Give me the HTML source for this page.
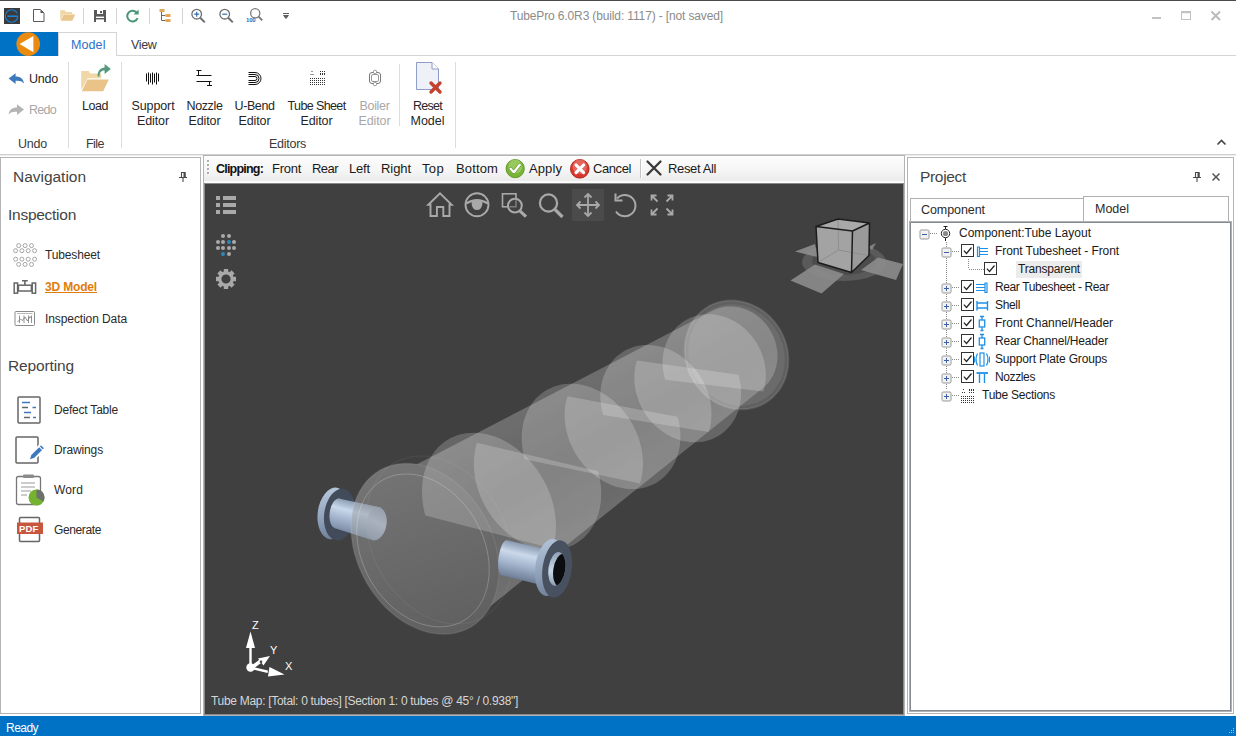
<!DOCTYPE html>
<html><head><meta charset='utf-8'><title>TubePro</title><style>
html,body{margin:0;padding:0}
body{width:1236px;height:736px;overflow:hidden;background:#fff;position:relative;font-family:"Liberation Sans",sans-serif;font-size:12px;color:#1e1e1e}
.t{position:absolute;white-space:pre;line-height:16px;height:16px}
.a{position:absolute}
svg{position:absolute;overflow:visible}
</style></head><body>
<div class='a' style='left:0;top:0;width:1236px;height:1px;background:#4a4a4a'></div>
<svg style="left:0;top:0" width="300" height="32" viewBox="0 0 300 32">
<rect x="4" y="8" width="16" height="16" fill="#3b3b3d"/>
<circle cx="11.6" cy="16" r="6.2" fill="none" stroke="#1b83d6" stroke-width="1.1"/>
<path d="M7.5 16.2 h9.5" stroke="#1b83d6" stroke-width="1.6"/>
<rect x="17" y="12.5" width="2" height="3" fill="#3b3b3d"/>
<path d="M33.5 9.5 h7 l3.5 3.5 v8.5 h-10.5 z" fill="#fff" stroke="#5a5a5a" stroke-width="1"/>
<path d="M40.5 9.5 v3.5 h3.5 z" fill="#5a5a5a"/>
<path d="M60.2 10.3 h4.6 l1 1.7 h6.4 v2.2 h-9 l-3 6.4 z" fill="#f0d7a6"/>
<path d="M63.6 14.6 h11.6 l-2.9 6.2 h-11.6 z" fill="#e9c68b"/>
<rect x="83" y="8" width="1" height="16" fill="#d4d4d4"/>
<path d="M94 10 h12 v12 h-12 z" fill="#595959"/>
<rect x="97" y="10" width="6" height="4" fill="#fff"/><rect x="100" y="11" width="2" height="2.2" fill="#595959"/>
<rect x="96" y="16.6" width="8" height="1.4" fill="#fff"/><rect x="96" y="19.4" width="8" height="2.6" fill="#fff"/>
<rect x="116" y="8" width="1" height="16" fill="#d4d4d4"/>
<path d="M137.2 13.2 A5.4 5.4 0 1 0 137.6 18.2" fill="none" stroke="#4a9577" stroke-width="2"/>
<path d="M138.6 9.6 v5 h-5 z" fill="#4a9577"/>
<rect x="149" y="8" width="1" height="16" fill="#d4d4d4"/>
<rect x="159.5" y="9" width="5" height="3" fill="#e3a857"/>
<path d="M161.5 12 v8.5 h4 M161.5 15.5 h4" fill="none" stroke="#6a6a6a" stroke-width="1"/>
<rect x="165.5" y="14" width="5" height="3" fill="#e3a857"/><rect x="165.5" y="19" width="5" height="3" fill="#e3a857"/>
<rect x="182" y="8" width="1" height="16" fill="#d4d4d4"/>
<circle cx="196.7" cy="14.2" r="4.8" fill="#fff" stroke="#6e6e6e" stroke-width="1.3"/>
<path d="M200.2 17.8 l4.6 4.6" stroke="#6e6e6e" stroke-width="2"/>
<path d="M194.2 14.2 h5 M196.7 11.7 v5" stroke="#2f6fba" stroke-width="1.2"/>
<circle cx="224.7" cy="14.2" r="4.8" fill="#fff" stroke="#6e6e6e" stroke-width="1.3"/>
<path d="M228.2 17.8 l4.6 4.6" stroke="#6e6e6e" stroke-width="2"/>
<path d="M222.2 14.2 h5" stroke="#2f6fba" stroke-width="1.2"/>
<circle cx="255.2" cy="13.2" r="4.6" fill="#fff" stroke="#7a7a7a" stroke-width="1.3"/>
<path d="M258.6 16.6 l3.6 3.8" stroke="#7a7a7a" stroke-width="2"/>
<path d="M283 13.5 h6 M283.6 15.5 h4.8 l-2.4 3 z" stroke="#5f5f5f" stroke-width="1" fill="#5f5f5f"/>
</svg>
<span class='t' style='left:246px;top:16px;font-size:6px;font-weight:700;color:#2f6fba;line-height:8px;height:8px;letter-spacing:-0.2px'>100</span>
<span class='t' style='left:510px;top:8.0px;font-size:12px;color:#8b8b8b;font-weight:400;letter-spacing:-0.136px;'>TubePro 6.0R3 (build: 1117) - [not saved]</span>
<svg style="left:1140px;top:0" width="96" height="32" viewBox="0 0 96 32">
<rect x="12" y="17" width="9" height="2" fill="#c2c2c2"/>
<rect x="41.5" y="11.5" width="9" height="8" fill="none" stroke="#c2c2c2" stroke-width="1"/><rect x="41" y="11" width="10" height="2.2" fill="#c2c2c2"/>
<path d="M71.5 11.5 l8.5 8.5 M80 11.5 l-8.5 8.5" stroke="#b9b9b9" stroke-width="1.8"/>
</svg>
<div class='a' style='left:0;top:32px;width:58px;height:24px;background:#0072c6'></div>
<svg style="left:0;top:32px" width="58" height="24" viewBox="0 32 58 24">
<circle cx="28.2" cy="44.1" r="11.8" fill="#ea8b10"/>
<path d="M19.6 44 L33.4 36 L33.4 52.2 Z" fill="#fff"/></svg>
<div class='a' style='left:117px;top:55px;width:1119px;height:1px;background:#d4d4d4'></div>
<div class='a' style='left:58px;top:32px;width:59px;height:24px;border:1px solid #d4d4d4;border-bottom:none;box-sizing:border-box;background:#fff'></div>
<span class='t' style='left:71px;top:37.0px;font-size:12.5px;color:#2a6fc9;font-weight:400;letter-spacing:0.091px;'>Model</span>
<span class='t' style='left:131px;top:37.0px;font-size:12.5px;color:#3a3a3a;font-weight:400;letter-spacing:-0.344px;'>View</span>
<svg style="left:0;top:56px" width="470" height="100" viewBox="0 56 470 100">
<path d="M8.6 78.6 L15.6 73.2 V76.4 C20.6 76.4 23.4 78.8 24 83.6 C21.8 81 19.6 80.6 15.6 80.8 V84 Z" fill="#3f79bd"/>
<path d="M24 109.6 L17 104.2 V107.4 C12 107.4 9.2 109.8 8.6 114.6 C10.8 112 13 111.6 17 111.8 V115 Z" fill="#b4b4b4"/>
<rect x="68" y="62" width="1" height="86" fill="#dcdcdc"/>
<rect x="121" y="62" width="1" height="86" fill="#dcdcdc"/>
<rect x="399" y="64" width="1" height="62" fill="#dcdcdc"/>
<rect x="455" y="62" width="1" height="86" fill="#dcdcdc"/>
<!-- load folder -->
<path d="M81.2 71 h7.4 l1.6 2.6 h11 v4.6 h-13.6 l-6.4 12 z" fill="#f0d7a6"/>
<path d="M87.4 79.6 h21.4 l-5.6 11.6 h-21.4 z" fill="#e9c388"/>
<path d="M97.6 76.4 C97.4 70.6 100.4 67.8 104.6 67.4 V64 L110.8 69 L104.6 74 V70.6 C101.6 70.6 99.2 72.6 99.6 76.4 Z" fill="#54997d"/>
<!-- support editor -->
<path d="M146.5 73.5 v8 M148.5 72.5 v12 M150.5 73.5 v9 M152.5 72.5 v12 M154.5 73.5 v9 M156.5 72.5 v12 M158.5 73.5 v8" stroke="#111" stroke-width="1"/>
<!-- nozzle editor -->
<path d="M196.5 70.5 h5 M198.5 70.5 v4.5 M196.5 75.5 h15 M196.5 81.5 h15 M209.5 81.5 v4.5 M207 85.5 h5" stroke="#111" stroke-width="1" fill="none"/>
<!-- u-bend editor -->
<path d="M248.5 72.5 h6.5 a6 6 0 0 1 0 12 h-6.5 M248.5 74.5 h6.5 a4 4 0 0 1 0 8 h-6.5 M248.5 76.5 h6.5 a2 2 0 0 1 0 4 h-6.5" stroke="#111" stroke-width="1" fill="none"/>
<!-- boiler editor -->
<rect x="369.5" y="72.5" width="11" height="11" rx="2.5" fill="none" stroke="#777" stroke-width="1"/>
<rect x="371.5" y="74.5" width="7" height="7" rx="1.5" fill="none" stroke="#999" stroke-width="1"/>
<circle cx="375" cy="72" r="1.8" fill="#fff" stroke="#888" stroke-width=".8"/><circle cx="375" cy="84" r="1.8" fill="#fff" stroke="#888" stroke-width=".8"/>
<!-- reset model -->
<path d="M416.5 62.5 h15.5 l6.5 6.5 v20.5 h-22 z" fill="#eef1f8" stroke="#8f9cc4" stroke-width="1"/>
<path d="M432 62.5 v6.5 h6.5" fill="#fff" stroke="#8f9cc4" stroke-width="1"/>
<path d="M431 83 l9 9 M440 83 l-9 9" stroke="#c6402e" stroke-width="3.4" stroke-linecap="round"/>
<path d="M1217.5 0" />
</svg>
<svg style='left:0;top:57px' width='470' height='100' viewBox='0 56 470 100'><rect x='320.0' y='70.0' width='1' height='1' fill='#333'/><rect x='322.0' y='70.0' width='1' height='1' fill='#333'/><rect x='324.0' y='70.0' width='1' height='1' fill='#333'/><rect x='320.0' y='73.0' width='1' height='1' fill='#333'/><rect x='322.0' y='73.0' width='1' height='1' fill='#333'/><rect x='324.0' y='73.0' width='1' height='1' fill='#333'/><rect x='311.5' y='70' width='1' height='1' fill='#333'/><rect x='310.5' y='73' width='1' height='1' fill='#333'/><rect x='312.5' y='73' width='1' height='1' fill='#333'/><rect x='320' y='72' width='1' height='1' fill='#333'/><rect x='322' y='72' width='1' height='1' fill='#333'/><rect x='324' y='72' width='1' height='1' fill='#333'/><rect x='310' y='77' width='1' height='1' fill='#333'/><rect x='312' y='77' width='1' height='1' fill='#333'/><rect x='314' y='77' width='1' height='1' fill='#333'/><rect x='316' y='77' width='1' height='1' fill='#333'/><rect x='318' y='77' width='1' height='1' fill='#333'/><rect x='320' y='77' width='1' height='1' fill='#333'/><rect x='322' y='77' width='1' height='1' fill='#333'/><rect x='324' y='77' width='1' height='1' fill='#333'/><rect x='310' y='79' width='1' height='1' fill='#333'/><rect x='312' y='79' width='1' height='1' fill='#333'/><rect x='314' y='79' width='1' height='1' fill='#333'/><rect x='316' y='79' width='1' height='1' fill='#333'/><rect x='318' y='79' width='1' height='1' fill='#333'/><rect x='320' y='79' width='1' height='1' fill='#333'/><rect x='322' y='79' width='1' height='1' fill='#333'/><rect x='324' y='79' width='1' height='1' fill='#333'/><rect x='310' y='81' width='1' height='1' fill='#333'/><rect x='312' y='81' width='1' height='1' fill='#333'/><rect x='314' y='81' width='1' height='1' fill='#333'/><rect x='316' y='81' width='1' height='1' fill='#333'/><rect x='318' y='81' width='1' height='1' fill='#333'/><rect x='320' y='81' width='1' height='1' fill='#333'/><rect x='322' y='81' width='1' height='1' fill='#333'/><rect x='324' y='81' width='1' height='1' fill='#333'/><rect x='310' y='83' width='1' height='1' fill='#333'/><rect x='312' y='83' width='1' height='1' fill='#333'/><rect x='314' y='83' width='1' height='1' fill='#333'/><rect x='316' y='83' width='1' height='1' fill='#333'/><rect x='318' y='83' width='1' height='1' fill='#333'/><rect x='320' y='83' width='1' height='1' fill='#333'/><rect x='322' y='83' width='1' height='1' fill='#333'/><rect x='324' y='83' width='1' height='1' fill='#333'/></svg>
<span class='t' style='left:29px;top:71.0px;font-size:12.5px;color:#262626;font-weight:400;letter-spacing:-0.223px;'>Undo</span>
<span class='t' style='left:29px;top:102.0px;font-size:12.5px;color:#a8a8a8;font-weight:400;letter-spacing:-0.723px;'>Redo</span>
<span class='t' style='left:82px;top:98.0px;font-size:12.5px;color:#262626;font-weight:400;letter-spacing:-0.453px;'>Load</span>
<span class='t' style='left:131.5px;top:98.0px;font-size:12.5px;color:#262626;font-weight:400;letter-spacing:-0.112px;'>Support</span>
<span class='t' style='left:137.0px;top:113.0px;font-size:12.5px;color:#262626;font-weight:400;letter-spacing:-0.109px;'>Editor</span>
<span class='t' style='left:186.5px;top:98.0px;font-size:12.5px;color:#262626;font-weight:400;letter-spacing:-0.370px;'>Nozzle</span>
<span class='t' style='left:188.5px;top:113.0px;font-size:12.5px;color:#262626;font-weight:400;letter-spacing:-0.109px;'>Editor</span>
<span class='t' style='left:234.5px;top:98.0px;font-size:12.5px;color:#262626;font-weight:400;letter-spacing:-0.398px;'>U-Bend</span>
<span class='t' style='left:238.5px;top:113.0px;font-size:12.5px;color:#262626;font-weight:400;letter-spacing:-0.109px;'>Editor</span>
<span class='t' style='left:287.5px;top:98.0px;font-size:12.5px;color:#262626;font-weight:400;letter-spacing:-0.617px;'>Tube Sheet</span>
<span class='t' style='left:300.5px;top:113.0px;font-size:12.5px;color:#262626;font-weight:400;letter-spacing:-0.109px;'>Editor</span>
<span class='t' style='left:359.5px;top:98.0px;font-size:12.5px;color:#a8a8a8;font-weight:400;letter-spacing:-0.328px;'>Boiler</span>
<span class='t' style='left:358.5px;top:113.0px;font-size:12.5px;color:#a8a8a8;font-weight:400;letter-spacing:-0.109px;'>Editor</span>
<span class='t' style='left:413.0px;top:98.0px;font-size:12.5px;color:#262626;font-weight:400;letter-spacing:-0.731px;'>Reset</span>
<span class='t' style='left:410.5px;top:113.0px;font-size:12.5px;color:#262626;font-weight:400;letter-spacing:-0.009px;'>Model</span>
<span class='t' style='left:18px;top:136.0px;font-size:12.5px;color:#3a3a3a;font-weight:400;letter-spacing:-0.223px;'>Undo</span>
<span class='t' style='left:86px;top:136.0px;font-size:12.5px;color:#3a3a3a;font-weight:400;letter-spacing:-0.539px;'>File</span>
<span class='t' style='left:269px;top:136.0px;font-size:12.5px;color:#3a3a3a;font-weight:400;letter-spacing:-0.272px;'>Editors</span>
<svg style='left:1214px;top:137px' width='14' height='10' viewBox='0 0 14 10'><path d='M3.5 7.5 L7.5 3.5 L11.5 7.5' fill='none' stroke='#444' stroke-width='1.6'/></svg>
<div class='a' style='left:0;top:154px;width:1236px;height:1px;background:#cfcfcf'></div>
<div class='a' style='left:0;top:155px;width:1236px;height:1px;background:#ececec'></div>
<div class='a' style='left:0;top:716px;width:1236px;height:20px;background:#0072c6'></div>
<span class='t' style='left:6px;top:719.5px;font-size:12px;color:#ffffff;font-weight:400;letter-spacing:-0.537px;'>Ready</span>
<svg style='left:1225px;top:726px' width='10' height='9' viewBox='0 0 10 9'><rect x='8' y='2' width='1' height='1' fill='#9cc6ea'/><rect x='6' y='4' width='1' height='1' fill='#9cc6ea'/><rect x='8' y='4' width='1' height='1' fill='#9cc6ea'/><rect x='4' y='6' width='1' height='1' fill='#9cc6ea'/><rect x='6' y='6' width='1' height='1' fill='#9cc6ea'/><rect x='8' y='6' width='1' height='1' fill='#9cc6ea'/></svg>
<div class='a' style='left:0;top:157px;width:201px;height:557px;border:1px solid #b4b4b4;box-sizing:border-box;background:#fff'></div>
<span class='t' style='left:13px;top:169.0px;font-size:15.5px;color:#444444;font-weight:400;letter-spacing:-0.025px;'>Navigation</span>
<svg style="left:178px;top:171px" width="10" height="12" viewBox="0 0 10 12"><path d="M1 6.5 h8 M3.5 1.5 h3.5 v5 h-3.5 z M5 7 v4" fill="none" stroke="#4a4a4a" stroke-width="1.1"/><rect x="5.5" y="1.5" width="2" height="5" fill="#4a4a4a"/></svg>
<span class='t' style='left:8px;top:207.0px;font-size:15.5px;color:#444444;font-weight:400;letter-spacing:-0.267px;'>Inspection</span>
<svg style='left:0;top:157px' width='200' height='560' viewBox='0 157 200 560'><circle cx='18.7' cy='245.6' r='2.0' fill='#fff' stroke='#9c9c9c' stroke-width='.9'/><circle cx='25.1' cy='245.6' r='2.0' fill='#fff' stroke='#9c9c9c' stroke-width='.9'/><circle cx='31.5' cy='245.6' r='2.0' fill='#fff' stroke='#9c9c9c' stroke-width='.9'/><circle cx='15.6' cy='250.7' r='2.0' fill='#fff' stroke='#9c9c9c' stroke-width='.9'/><circle cx='21.9' cy='250.7' r='2.0' fill='#fff' stroke='#9c9c9c' stroke-width='.9'/><circle cx='28.2' cy='250.7' r='2.0' fill='#fff' stroke='#9c9c9c' stroke-width='.9'/><circle cx='34.6' cy='250.7' r='2.0' fill='#fff' stroke='#9c9c9c' stroke-width='.9'/><circle cx='15.6' cy='259.2' r='2.0' fill='#fff' stroke='#9c9c9c' stroke-width='.9'/><circle cx='21.9' cy='259.2' r='2.0' fill='#fff' stroke='#9c9c9c' stroke-width='.9'/><circle cx='28.2' cy='259.2' r='2.0' fill='#fff' stroke='#9c9c9c' stroke-width='.9'/><circle cx='34.6' cy='259.2' r='2.0' fill='#fff' stroke='#9c9c9c' stroke-width='.9'/><circle cx='18.7' cy='264.4' r='2.0' fill='#fff' stroke='#9c9c9c' stroke-width='.9'/><circle cx='25.1' cy='264.4' r='2.0' fill='#fff' stroke='#9c9c9c' stroke-width='.9'/><circle cx='31.5' cy='264.4' r='2.0' fill='#fff' stroke='#9c9c9c' stroke-width='.9'/>
<!-- 3d model icon -->
<rect x="14.2" y="283" width="3.4" height="10.2" fill="#fff" stroke="#666" stroke-width="1.5"/>
<rect x="32.2" y="283" width="3.4" height="10.2" fill="#fff" stroke="#666" stroke-width="1.5"/>
<rect x="18.4" y="285.2" width="13" height="5.8" fill="#fff" stroke="#666" stroke-width="1.5"/>
<path d="M24.9 285 v-4 M22 280.7 h5.8" stroke="#666" stroke-width="1.6"/>
<!-- inspection data icon -->
<rect x="15" y="311.5" width="19.5" height="14" rx="1" fill="#fff" stroke="#8a8a8a" stroke-width="1"/>
<path d="M17 313.5 h15.5" stroke="#aaa" stroke-width=".8"/>
<path d="M17.5 322 l3 -3 l2 1.5 l2.5 -3.5 l2.5 4 l2.5 -4.5 l1.5 2 M19.5 315.5 v7.5 M24 315.5 v7.5 M28.5 315.5 v7.5 M31.5 315.5 v7.5" fill="none" stroke="#777" stroke-width=".8"/>
<!-- defect table -->
<rect x="18" y="397" width="22" height="26" rx="1" fill="#fff" stroke="#666" stroke-width="1.5"/>
<path d="M22 402.5 h8 M24 412.5 h7" stroke="#3f79bd" stroke-width="1.4"/>
<path d="M22 407.5 h6 M24 417.5 h6" stroke="#666" stroke-width="1.4"/>
<path d="M32.5 407.5 h3.5 M33 417.5 h3" stroke="#3f79bd" stroke-width="1.4"/>
<!-- drawings -->
<rect x="16" y="437" width="22" height="26" rx="1" fill="#fff" stroke="#666" stroke-width="1.5"/>
<path d="M30.500 454.500 l10.5 -10.500 l4.200 4.200 l-10.500 10.500 l-6 1.800 z" fill="#3f79bd" stroke="#fff" stroke-width="1.8"/>
<path d="M38.800 446.200 l4.200 4.200" stroke="#fff" stroke-width="1.100"/>
<!-- word -->
<rect x="16.5" y="476.5" width="24" height="28" rx="2" fill="#fff" stroke="#777" stroke-width="1.3"/>
<rect x="23" y="474.5" width="11" height="3.5" rx="1" fill="#8a8a8a"/>
<path d="M21 483 h14 M21 487 h14 M21 491 h10 M21 495 h6" stroke="#999" stroke-width="1.2"/>
<circle cx="36.5" cy="497.5" r="8" fill="#74b230"/>
<path d="M36.5 497.5 L36.5 489.5 A8 8 0 0 1 43.4 501.5 Z" fill="#6f6f6f"/>
<!-- pdf -->
<rect x="19.5" y="517.5" width="20" height="24" rx="1" fill="#fff" stroke="#666" stroke-width="1.5"/>
<rect x="17" y="522.5" width="26" height="11.5" fill="#c8553d"/>
</svg>
<span class='t' style='left:19px;top:523px;font-size:9.5px;font-weight:700;color:#fff;line-height:11px;height:11px;letter-spacing:0.2px'>PDF</span>
<span class='t' style='left:45px;top:247.0px;font-size:12px;color:#2a2a2a;font-weight:400;letter-spacing:-0.141px;'>Tubesheet</span>
<span class='t' style='left:45px;top:279.0px;font-size:12px;color:#e07c0c;font-weight:700;letter-spacing:-0.168px;text-decoration:underline'>3D Model</span>
<span class='t' style='left:45px;top:311.0px;font-size:12px;color:#2a2a2a;font-weight:400;letter-spacing:-0.093px;'>Inspection Data</span>
<span class='t' style='left:8px;top:358.0px;font-size:15.5px;color:#444444;font-weight:400;letter-spacing:-0.135px;'>Reporting</span>
<span class='t' style='left:54px;top:402.0px;font-size:12px;color:#2a2a2a;font-weight:400;letter-spacing:-0.208px;'>Defect Table</span>
<span class='t' style='left:54px;top:442.0px;font-size:12px;color:#2a2a2a;font-weight:400;letter-spacing:-0.127px;'>Drawings</span>
<span class='t' style='left:54px;top:482.0px;font-size:12px;color:#2a2a2a;font-weight:400;letter-spacing:0.137px;'>Word</span>
<span class='t' style='left:54px;top:522.0px;font-size:12px;color:#2a2a2a;font-weight:400;letter-spacing:-0.381px;'>Generate</span>
<div class='a' style='left:203px;top:155px;width:702px;height:561px;background:#b4b4b4'></div><div class='a' style='left:204px;top:183px;width:700px;height:532px;background:#8a8a8a'></div>
<div class='a' style='left:204px;top:156px;width:700px;height:27px;background:linear-gradient(#fdfdfd,#f5f5f5 55%,#ebebeb 92%,#fbfbfb 93%)'></div>
<svg style='left:204px;top:156px' width='700' height='27' viewBox='204 156 700 27'><rect x='208' y='161' width='2' height='2' fill='#fff'/><rect x='207' y='160' width='2' height='2' fill='#adadad'/><rect x='208' y='165' width='2' height='2' fill='#fff'/><rect x='207' y='164' width='2' height='2' fill='#adadad'/><rect x='208' y='169' width='2' height='2' fill='#fff'/><rect x='207' y='168' width='2' height='2' fill='#adadad'/><rect x='208' y='173' width='2' height='2' fill='#fff'/><rect x='207' y='172' width='2' height='2' fill='#adadad'/>
<circle cx="515.2" cy="168.6" r="9.1" fill="#79b437" stroke="#5e9a2c" stroke-width="1"/>
<circle cx="515.2" cy="166.6" r="7" fill="#aed774" opacity=".6"/>
<path d="M510.6 168.8 l3.2 3.4 l6 -7.4" fill="none" stroke="#5d8a35" stroke-width="3.6" stroke-linecap="round" stroke-linejoin="round" opacity=".7"/><path d="M510.6 168.8 l3.2 3.4 l6 -7.4" fill="none" stroke="#fff" stroke-width="2.2" stroke-linecap="round" stroke-linejoin="round"/>

<circle cx="579.8" cy="168.8" r="9.3" fill="#d8372e" stroke="#b3291f" stroke-width="1"/>
<circle cx="579.8" cy="166.8" r="7.2" fill="#f08a82" opacity=".55"/>
<path d="M576 165 l7.6 7.6 M583.6 165 l-7.6 7.6" stroke="#fff" stroke-width="3.1" stroke-linecap="round"/>
<rect x="640" y="159" width="1" height="19" fill="#c4c4c4"/><rect x="641" y="159" width="1" height="19" fill="#fff"/>
<path d="M647.5 161.5 l13 13 M660.5 161.5 l-13 13" stroke="#3a3a3a" stroke-width="2.3" stroke-linecap="round"/>
</svg>
<span class='t' style='left:216px;top:161.0px;font-size:12.5px;color:#111;font-weight:700;letter-spacing:-0.795px;'>Clipping:</span>
<span class='t' style='left:272px;top:161.0px;font-size:13px;color:#1a1a1a;font-weight:400;letter-spacing:-0.269px;'>Front</span>
<span class='t' style='left:312px;top:161.0px;font-size:13px;color:#1a1a1a;font-weight:400;letter-spacing:-0.547px;'>Rear</span>
<span class='t' style='left:349px;top:161.0px;font-size:13px;color:#1a1a1a;font-weight:400;letter-spacing:-0.172px;'>Left</span>
<span class='t' style='left:381px;top:161.0px;font-size:13px;color:#1a1a1a;font-weight:400;letter-spacing:-0.072px;'>Right</span>
<span class='t' style='left:422px;top:161.0px;font-size:13px;color:#1a1a1a;font-weight:400;letter-spacing:0.344px;'>Top</span>
<span class='t' style='left:456px;top:161.0px;font-size:13px;color:#1a1a1a;font-weight:400;letter-spacing:0.135px;'>Bottom</span>
<span class='t' style='left:529px;top:161.0px;font-size:13px;color:#1a1a1a;font-weight:400;letter-spacing:0.094px;'>Apply</span>
<span class='t' style='left:593px;top:161.0px;font-size:13px;color:#1a1a1a;font-weight:400;letter-spacing:-0.411px;'>Cancel</span>
<span class='t' style='left:668px;top:161.0px;font-size:13px;color:#1a1a1a;font-weight:400;letter-spacing:-0.368px;'>Reset All</span>
<div class='a' style='left:205px;top:184px;width:698px;height:530px;background:#404040'></div>
<svg style='left:205px;top:184px' width='698' height='530' viewBox='205 184 698 530'><clipPath id='vp'><rect x='205' y='184' width='698' height='530'/></clipPath><g clip-path='url(#vp)'><defs>
<linearGradient id="shg" gradientUnits="userSpaceOnUse" x1="470" y1="400" x2="560" y2="560"><stop offset="0" stop-color="#fff" stop-opacity=".27"/><stop offset=".55" stop-color="#fff" stop-opacity=".19"/><stop offset="1" stop-color="#fff" stop-opacity=".25"/></linearGradient>
<linearGradient id="frg" gradientUnits="userSpaceOnUse" x1="400" y1="470" x2="450" y2="630"><stop offset="0" stop-color="#fff" stop-opacity=".27"/><stop offset="1" stop-color="#fff" stop-opacity=".17"/></linearGradient>
<linearGradient id="nzl" gradientUnits="userSpaceOnUse" x1="362" y1="502" x2="354" y2="536"><stop offset="0" stop-color="#8293ab"/><stop offset=".32" stop-color="#c9d8ea"/><stop offset=".6" stop-color="#a3b5cd"/><stop offset="1" stop-color="#74859d"/></linearGradient>
<linearGradient id="nzr" gradientUnits="userSpaceOnUse" x1="526" y1="544" x2="518" y2="580"><stop offset="0" stop-color="#8797ae"/><stop offset=".3" stop-color="#cbd9ea"/><stop offset=".6" stop-color="#a2b5cd"/><stop offset="1" stop-color="#6b7b93"/></linearGradient>
<linearGradient id="rimL" gradientUnits="userSpaceOnUse" x1="318" y1="495" x2="332" y2="540"><stop offset="0" stop-color="#b3c3d8"/><stop offset=".5" stop-color="#93a5bd"/><stop offset="1" stop-color="#6f8097"/></linearGradient>
<linearGradient id="rimR" gradientUnits="userSpaceOnUse" x1="536" y1="545" x2="548" y2="596"><stop offset="0" stop-color="#aebfd5"/><stop offset=".5" stop-color="#95a7bf"/><stop offset="1" stop-color="#73849b"/></linearGradient>
<linearGradient id="capL" gradientUnits="userSpaceOnUse" x1="380" y1="508" x2="372" y2="540"><stop offset="0" stop-color="#8d9bb0"/><stop offset=".45" stop-color="#b9c6d8"/><stop offset="1" stop-color="#8494aa"/></linearGradient>
<linearGradient id="inR" gradientUnits="userSpaceOnUse" x1="552" y1="552" x2="550" y2="586"><stop offset="0" stop-color="#90a1b8"/><stop offset=".55" stop-color="#c9d7e8"/><stop offset="1" stop-color="#8c9cb3"/></linearGradient>
</defs>
<g>
<ellipse cx="333.3" cy="513.4" rx="15.6" ry="26" transform="rotate(8 333.3 513.4)" fill="url(#rimL)"/>
<ellipse cx="339.8" cy="514.6" rx="15.6" ry="26" transform="rotate(8 339.8 514.6)" fill="#424b5a"/>
<ellipse cx="337.2" cy="513.2" rx="7.5" ry="14.9" transform="rotate(8 337.2 513.2)" fill="url(#nzl)"/>
<path d="M338.6 498.4 L380.7 507.6 L373.2 540.2 L334.2 527.9 Z" fill="url(#nzl)"/>
<ellipse cx="376.2" cy="523.8" rx="10.2" ry="16.6" transform="rotate(10 376.2 523.8)" fill="url(#capL)"/>
</g>
<mask id='mfront' maskUnits='userSpaceOnUse' x='205' y='184' width='698' height='530'><rect x='205' y='184' width='698' height='530' fill='#fff'/><path d='M499.0 570.2 L498.7 562.8 L497.8 555.3 L496.4 547.8 L494.4 540.2 L491.9 532.7 L488.8 525.4 L485.2 518.2 L481.2 511.3 L476.7 504.6 L471.9 498.4 L466.6 492.5 L461.1 487.0 L455.2 482.0 L449.1 477.6 L442.8 473.7 L436.4 470.4 L429.9 467.7 L423.4 465.6 L416.8 464.2 L410.4 463.5 L404.0 463.4 L397.8 464.0 L391.8 465.3 L386.1 467.2 L380.7 469.7 L375.6 472.9 L371.0 476.7 L366.7 481.0 L362.9 485.9 L359.6 491.2 L356.8 497.0 L354.5 503.2 L352.8 509.8 L351.7 516.6 L351.1 523.8 L351.1 531.1 L351.7 538.5 L352.8 546.1 L354.5 553.6 L356.8 561.1 L359.6 568.6 L362.9 575.8 L366.7 582.9 L371.0 589.7 L375.6 596.1 L380.7 602.2 L386.1 607.9 L391.8 613.1 L397.8 617.9 L404.0 622.0 L410.4 625.6 L416.8 628.6 L423.4 631.0 L429.9 632.7 L436.4 633.8 L442.8 634.2 L449.1 634.0 L455.2 633.0 L461.1 631.4 L466.6 629.2 L471.9 626.4 L476.7 622.9 L481.2 618.8 L485.2 614.2 L488.8 609.1 L491.9 603.5 L494.4 597.5 L496.4 591.1 L497.8 584.4 L498.7 577.4 L499.0 570.2 Z' fill='#000'/></mask>
<path d='M359.6 529.1 L360.2 522.6 L361.2 516.4 L362.8 510.4 L364.8 504.8 L367.4 499.5 L370.4 494.6 L373.9 490.2 L377.7 486.3 L382.0 482.8 L386.6 480.0 L711.8 311.1 L715.1 309.4 L718.6 308.2 L722.2 307.2 L725.9 306.6 L729.6 306.4 L733.4 306.5 L737.3 307.0 L741.0 307.8 L744.8 309.0 L748.4 310.5 L752.0 312.3 L755.4 314.4 L758.6 316.8 L761.7 319.5 L764.5 322.5 L767.1 325.6 L769.5 329.0 L771.5 332.5 L773.3 336.2 L774.8 340.1 L776.0 344.0 L776.8 347.9 L777.3 351.9 L777.5 355.9 L777.3 359.9 L776.8 363.8 L776.0 367.6 L774.8 371.2 L773.3 374.8 L771.5 378.1 L769.5 381.2 L767.1 384.1 L764.5 386.8 L761.7 389.1 L474.0 619.3 L469.5 622.5 L464.8 625.1 L459.7 627.1 L454.4 628.6 L448.8 629.4 L443.1 629.6 L437.3 629.3 L431.4 628.3 L425.4 626.7 L419.5 624.5 L413.6 621.8 L407.8 618.5 L402.2 614.7 L396.7 610.5 L391.5 605.7 L386.6 600.5 L382.0 595.0 L377.7 589.1 L373.9 582.9 L370.4 576.5 L367.4 569.9 L364.8 563.1 L362.8 556.3 L361.2 549.4 L360.2 542.6 L359.6 535.8 Z' fill='url(#shg)' mask='url(#mfront)'/>
<path d='M788.4 360.1 L788.2 355.3 L787.6 350.5 L786.6 345.7 L785.2 341.0 L783.4 336.4 L781.3 331.9 L778.8 327.7 L775.9 323.6 L772.8 319.8 L769.4 316.2 L765.7 313.0 L761.8 310.1 L757.7 307.5 L753.4 305.4 L749.0 303.6 L744.5 302.2 L739.9 301.2 L735.4 300.6 L730.8 300.5 L726.2 300.7 L721.8 301.5 L717.4 302.6 L713.2 304.1 L709.2 306.0 L705.4 308.4 L701.9 311.0 L698.6 314.1 L695.6 317.4 L693.0 321.1 L690.6 325.0 L688.7 329.1 L687.1 333.4 L685.9 337.9 L685.1 342.6 L684.7 347.3 L684.7 352.1 L685.1 356.9 L685.9 361.7 L687.1 366.5 L688.7 371.1 L690.6 375.7 L693.0 380.0 L695.6 384.2 L698.6 388.1 L701.9 391.8 L705.4 395.2 L709.2 398.3 L713.2 401.0 L717.4 403.4 L721.8 405.4 L726.2 407.0 L730.8 408.2 L735.4 409.0 L739.9 409.3 L744.5 409.3 L749.0 408.8 L753.4 407.8 L757.7 406.5 L761.8 404.8 L765.7 402.6 L769.4 400.1 L772.8 397.3 L775.9 394.1 L778.8 390.6 L781.3 386.8 L783.4 382.8 L785.2 378.6 L786.6 374.1 L787.6 369.6 L788.2 364.9 L788.4 360.1 Z' fill='#fff' fill-opacity='.17'/>
<path d='M784.8 359.7 L784.6 355.3 L784.0 350.8 L783.1 346.3 L781.8 342.0 L780.1 337.7 L778.1 333.5 L775.8 329.6 L773.2 325.8 L770.3 322.2 L767.1 319.0 L763.6 315.9 L760.0 313.2 L756.2 310.9 L752.2 308.8 L748.1 307.1 L743.9 305.8 L739.7 304.9 L735.4 304.4 L731.2 304.3 L727.0 304.5 L722.8 305.2 L718.8 306.2 L714.9 307.7 L711.1 309.5 L707.6 311.6 L704.3 314.1 L701.3 316.9 L698.5 320.0 L696.0 323.4 L693.8 327.0 L692.0 330.9 L690.5 334.9 L689.4 339.1 L688.7 343.4 L688.3 347.8 L688.3 352.3 L688.7 356.8 L689.4 361.2 L690.5 365.7 L692.0 370.0 L693.8 374.2 L696.0 378.3 L698.5 382.1 L701.3 385.8 L704.3 389.2 L707.6 392.4 L711.1 395.3 L714.9 397.8 L718.8 400.0 L722.8 401.9 L727.0 403.4 L731.2 404.5 L735.4 405.2 L739.7 405.5 L743.9 405.4 L748.1 405.0 L752.2 404.1 L756.2 402.9 L760.0 401.3 L763.6 399.3 L767.1 397.0 L770.3 394.3 L773.2 391.4 L775.8 388.1 L778.1 384.6 L780.1 380.9 L781.8 376.9 L783.1 372.8 L784.0 368.5 L784.6 364.2 L784.8 359.7 Z' fill='#fff' fill-opacity='.07'/>
<path d='M788.4 360.1 L788.2 355.3 L787.6 350.5 L786.6 345.7 L785.2 341.0 L783.4 336.4 L781.3 331.9 L778.8 327.7 L775.9 323.6 L772.8 319.8 L769.4 316.2 L765.7 313.0 L761.8 310.1 L757.7 307.5 L753.4 305.4 L749.0 303.6 L744.5 302.2 L739.9 301.2 L735.4 300.6 L730.8 300.5 L726.2 300.7 L721.8 301.5 L717.4 302.6 L713.2 304.1 L709.2 306.0 L705.4 308.4 L701.9 311.0 L698.6 314.1 L695.6 317.4 L693.0 321.1 L690.6 325.0 L688.7 329.1 L687.1 333.4 L685.9 337.9 L685.1 342.6 L684.7 347.3 L684.7 352.1 L685.1 356.9 L685.9 361.7 L687.1 366.5 L688.7 371.1 L690.6 375.7 L693.0 380.0 L695.6 384.2 L698.6 388.1 L701.9 391.8 L705.4 395.2 L709.2 398.3 L713.2 401.0 L717.4 403.4 L721.8 405.4 L726.2 407.0 L730.8 408.2 L735.4 409.0 L739.9 409.3 L744.5 409.3 L749.0 408.8 L753.4 407.8 L757.7 406.5 L761.8 404.8 L765.7 402.6 L769.4 400.1 L772.8 397.3 L775.9 394.1 L778.8 390.6 L781.3 386.8 L783.4 382.8 L785.2 378.6 L786.6 374.1 L787.6 369.6 L788.2 364.9 L788.4 360.1 Z' fill='none' stroke='#fff' stroke-opacity='.10' stroke-width='2'/>
<path d='M763.2 391.5 L764.2 388.3 L764.9 385.0 L765.4 381.6 L765.7 378.2 L765.8 374.7 L765.7 371.2 L765.4 367.7 L764.8 364.3 L764.1 360.8 L763.1 357.4 L762.0 354.0 L760.6 350.6 L759.1 347.4 L757.4 344.2 L755.5 341.1 L753.4 338.2 L751.2 335.4 L748.8 332.7 L746.3 330.1 L743.7 327.7 L740.9 325.5 L738.0 323.5 L735.0 321.6 L732.0 320.0 L728.8 318.5 L725.6 317.2 L722.4 316.2 L719.1 315.4 L715.8 314.7 L712.5 314.3 L709.2 314.2 L706.0 314.2 L702.7 314.5 L699.5 315.0 L696.4 315.7 L693.3 316.7 L690.4 317.8 L687.5 319.2 L684.7 320.7 L682.1 322.5 L679.6 324.4 L677.2 326.6 L675.0 328.9 L672.9 331.3 L671.0 333.9 L669.3 336.7 L667.8 339.6 L666.4 342.6 L665.3 345.7 L664.3 348.9 L663.6 352.2 L663.0 355.6 L662.7 359.0 L662.6 362.4 L662.7 365.9 L663.0 369.4 L663.5 372.9 L664.2 376.4 L665.1 379.8 Z' fill='#fff' fill-opacity='.20'/>
<path d='M636.9 360.6 L636.0 363.9 L635.2 367.3 L634.7 370.8 L634.4 374.4 L634.3 378.0 L634.4 381.6 L634.8 385.3 L635.3 388.9 L636.1 392.6 L637.1 396.2 L638.3 399.7 L639.7 403.2 L641.2 406.7 L643.0 410.0 L645.0 413.2 L647.1 416.4 L649.4 419.4 L651.9 422.2 L654.5 424.9 L657.2 427.5 L660.1 429.8 L663.1 432.0 L666.1 434.0 L669.3 435.8 L672.6 437.4 L675.9 438.8 L679.2 440.0 L682.6 440.9 L686.0 441.6 L689.4 442.1 L692.8 442.3 L696.2 442.3 L699.6 442.1 L702.9 441.7 L706.1 441.0 L709.3 440.1 L712.4 438.9 L715.4 437.6 L718.2 436.0 L721.0 434.2 L723.6 432.2 L726.0 430.1 L728.3 427.7 L730.5 425.2 L732.4 422.5 L734.2 419.7 L735.8 416.7 L737.2 413.6 L738.4 410.3 L739.4 407.0 L740.1 403.6 L740.7 400.1 L741.0 396.5 L741.1 392.9 L741.1 389.3 L740.7 385.7 L740.2 382.0 L739.5 378.4 L738.5 374.8 Z' fill='#fff' fill-opacity='.20'/>
<path d='M708.8 432.1 L709.8 428.6 L710.6 425.1 L711.1 421.4 L711.4 417.7 L711.5 413.9 L711.4 410.1 L711.1 406.2 L710.5 402.4 L709.7 398.6 L708.7 394.7 L707.4 391.0 L706.0 387.3 L704.3 383.6 L702.5 380.1 L700.4 376.7 L698.2 373.3 L695.8 370.1 L693.3 367.1 L690.5 364.2 L687.7 361.4 L684.7 358.9 L681.6 356.5 L678.4 354.3 L675.1 352.4 L671.7 350.6 L668.3 349.1 L664.8 347.8 L661.3 346.8 L657.7 345.9 L654.2 345.4 L650.6 345.0 L647.1 344.9 L643.6 345.1 L640.2 345.5 L636.8 346.1 L633.5 347.0 L630.3 348.2 L627.2 349.5 L624.2 351.1 L621.4 352.9 L618.6 354.9 L616.1 357.1 L613.7 359.5 L611.5 362.2 L609.4 364.9 L607.6 367.9 L605.9 371.0 L604.5 374.2 L603.2 377.6 L602.2 381.0 L601.4 384.6 L600.8 388.3 L600.5 392.0 L600.3 395.8 L600.4 399.6 L600.8 403.4 L601.3 407.3 L602.1 411.1 L603.1 414.9 Z' fill='#fff' fill-opacity='.20'/>
<path d='M567.5 396.2 L566.5 399.9 L565.7 403.6 L565.1 407.5 L564.8 411.4 L564.6 415.3 L564.8 419.3 L565.1 423.4 L565.7 427.4 L566.6 431.5 L567.6 435.5 L568.9 439.5 L570.4 443.4 L572.2 447.2 L574.1 451.0 L576.2 454.7 L578.5 458.2 L581.0 461.6 L583.7 464.9 L586.5 468.0 L589.5 470.9 L592.6 473.7 L595.8 476.2 L599.2 478.6 L602.6 480.7 L606.1 482.6 L609.7 484.3 L613.3 485.7 L617.0 486.9 L620.7 487.8 L624.4 488.5 L628.1 488.9 L631.7 489.1 L635.4 489.0 L639.0 488.7 L642.5 488.1 L645.9 487.2 L649.2 486.1 L652.5 484.8 L655.6 483.2 L658.6 481.3 L661.4 479.3 L664.0 477.0 L666.5 474.5 L668.8 471.8 L671.0 469.0 L672.9 465.9 L674.6 462.7 L676.1 459.3 L677.4 455.8 L678.5 452.2 L679.3 448.5 L679.9 444.7 L680.3 440.8 L680.4 436.8 L680.3 432.8 L680.0 428.8 L679.4 424.7 L678.6 420.7 L677.5 416.7 Z' fill='#fff' fill-opacity='.20'/>
<path d='M640.0 483.5 L641.0 479.7 L641.9 475.7 L642.5 471.7 L642.9 467.6 L643.0 463.4 L642.8 459.1 L642.4 454.9 L641.8 450.6 L640.9 446.3 L639.8 442.0 L638.5 437.8 L636.9 433.6 L635.1 429.5 L633.1 425.5 L630.8 421.5 L628.4 417.7 L625.8 414.1 L623.0 410.6 L620.1 407.2 L616.9 404.0 L613.7 401.1 L610.3 398.3 L606.8 395.7 L603.2 393.4 L599.5 391.3 L595.8 389.4 L592.0 387.8 L588.1 386.5 L584.3 385.4 L580.4 384.6 L576.5 384.0 L572.7 383.8 L568.9 383.8 L565.1 384.0 L561.4 384.6 L557.8 385.4 L554.3 386.5 L551.0 387.9 L547.7 389.5 L544.6 391.3 L541.6 393.4 L538.8 395.8 L536.2 398.3 L533.8 401.1 L531.6 404.1 L529.6 407.3 L527.8 410.6 L526.2 414.2 L524.8 417.8 L523.7 421.6 L522.8 425.5 L522.2 429.6 L521.8 433.7 L521.7 437.9 L521.8 442.1 L522.2 446.4 L522.8 450.7 L523.6 455.0 L524.7 459.2 Z' fill='#fff' fill-opacity='.20'/>
<path d='M477.0 442.8 L475.8 446.8 L475.0 450.9 L474.3 455.2 L473.9 459.6 L473.8 464.0 L474.0 468.5 L474.4 473.0 L475.0 477.6 L476.0 482.2 L477.1 486.7 L478.6 491.3 L480.2 495.7 L482.1 500.1 L484.2 504.4 L486.6 508.7 L489.1 512.7 L491.9 516.7 L494.8 520.5 L497.9 524.1 L501.2 527.5 L504.6 530.8 L508.1 533.8 L511.8 536.6 L515.6 539.2 L519.5 541.5 L523.4 543.5 L527.4 545.3 L531.4 546.9 L535.5 548.1 L539.6 549.1 L543.6 549.7 L547.7 550.1 L551.7 550.2 L555.6 550.0 L559.5 549.5 L563.3 548.7 L566.9 547.7 L570.5 546.3 L573.9 544.7 L577.2 542.8 L580.3 540.6 L583.2 538.2 L586.0 535.6 L588.5 532.7 L590.8 529.6 L593.0 526.2 L594.9 522.7 L596.5 519.0 L597.9 515.2 L599.1 511.2 L600.0 507.0 L600.7 502.8 L601.1 498.4 L601.2 494.0 L601.1 489.5 L600.7 485.0 L600.1 480.4 L599.2 475.8 L598.1 471.3 Z' fill='#fff' fill-opacity='.20'/>
<path d='M552.7 548.6 L553.9 544.4 L554.8 540.0 L555.5 535.5 L555.9 530.8 L556.0 526.1 L555.9 521.4 L555.4 516.5 L554.7 511.7 L553.8 506.8 L552.5 501.9 L551.1 497.1 L549.3 492.3 L547.3 487.6 L545.1 483.0 L542.6 478.4 L539.9 474.0 L537.1 469.8 L534.0 465.7 L530.7 461.8 L527.3 458.0 L523.7 454.5 L519.9 451.2 L516.1 448.2 L512.1 445.4 L508.0 442.8 L503.9 440.5 L499.7 438.5 L495.4 436.8 L491.1 435.4 L486.9 434.3 L482.6 433.5 L478.3 433.0 L474.1 432.8 L470.0 432.9 L465.9 433.3 L461.9 434.1 L458.1 435.1 L454.3 436.5 L450.7 438.1 L447.3 440.1 L444.0 442.3 L440.9 444.8 L438.0 447.5 L435.4 450.5 L432.9 453.8 L430.7 457.2 L428.7 460.9 L426.9 464.8 L425.4 468.9 L424.2 473.1 L423.2 477.4 L422.5 481.9 L422.1 486.6 L422.0 491.3 L422.1 496.0 L422.5 500.8 L423.1 505.7 L424.1 510.6 L425.3 515.4 Z' fill='#fff' fill-opacity='.20'/>
<path d='M512.1 560.7 L511.8 553.4 L511.0 546.0 L509.6 538.6 L507.6 531.2 L505.1 523.8 L502.1 516.6 L498.6 509.6 L494.6 502.8 L490.2 496.3 L485.4 490.1 L480.2 484.3 L474.7 479.0 L468.9 474.1 L462.9 469.8 L456.7 466.0 L450.4 462.8 L444.0 460.1 L437.5 458.2 L431.1 456.8 L424.7 456.1 L418.4 456.1 L412.3 456.7 L406.4 458.0 L400.8 459.9 L395.4 462.4 L390.5 465.6 L385.8 469.3 L381.6 473.6 L377.9 478.4 L374.6 483.7 L371.9 489.4 L369.6 495.5 L367.9 502.0 L366.8 508.7 L366.2 515.8 L366.2 523.0 L366.8 530.3 L367.9 537.7 L369.6 545.1 L371.9 552.5 L374.6 559.8 L377.9 566.9 L381.6 573.9 L385.8 580.5 L390.5 586.9 L395.4 592.9 L400.8 598.4 L406.4 603.5 L412.3 608.1 L418.4 612.2 L424.7 615.7 L431.1 618.6 L437.5 620.9 L444.0 622.6 L450.4 623.6 L456.7 624.0 L462.9 623.7 L468.9 622.8 L474.7 621.2 L480.2 618.9 L485.4 616.1 L490.2 612.6 L494.6 608.6 L498.6 604.1 L502.1 599.0 L505.1 593.5 L507.6 587.6 L509.6 581.3 L511.0 574.7 L511.8 567.8 L512.1 560.7 Z' fill='none' stroke='#fff' stroke-opacity='.05' stroke-width='1.2'/>
<path d='M499.0 570.2 L498.7 562.8 L497.8 555.3 L496.4 547.8 L494.4 540.2 L491.9 532.7 L488.8 525.4 L485.2 518.2 L481.2 511.3 L476.7 504.6 L471.9 498.4 L466.6 492.5 L461.1 487.0 L455.2 482.0 L449.1 477.6 L442.8 473.7 L436.4 470.4 L429.9 467.7 L423.4 465.6 L416.8 464.2 L410.4 463.5 L404.0 463.4 L397.8 464.0 L391.8 465.3 L386.1 467.2 L380.7 469.7 L375.6 472.9 L371.0 476.7 L366.7 481.0 L362.9 485.9 L359.6 491.2 L356.8 497.0 L354.5 503.2 L352.8 509.8 L351.7 516.6 L351.1 523.8 L351.1 531.1 L351.7 538.5 L352.8 546.1 L354.5 553.6 L356.8 561.1 L359.6 568.6 L362.9 575.8 L366.7 582.9 L371.0 589.7 L375.6 596.1 L380.7 602.2 L386.1 607.9 L391.8 613.1 L397.8 617.9 L404.0 622.0 L410.4 625.6 L416.8 628.6 L423.4 631.0 L429.9 632.7 L436.4 633.8 L442.8 634.2 L449.1 634.0 L455.2 633.0 L461.1 631.4 L466.6 629.2 L471.9 626.4 L476.7 622.9 L481.2 618.8 L485.2 614.2 L488.8 609.1 L491.9 603.5 L494.4 597.5 L496.4 591.1 L497.8 584.4 L498.7 577.4 L499.0 570.2 Z' fill='url(#frg)'/>
<clipPath id='cfront'><path d='M499.0 570.2 L498.7 562.8 L497.8 555.3 L496.4 547.8 L494.4 540.2 L491.9 532.7 L488.8 525.4 L485.2 518.2 L481.2 511.3 L476.7 504.6 L471.9 498.4 L466.6 492.5 L461.1 487.0 L455.2 482.0 L449.1 477.6 L442.8 473.7 L436.4 470.4 L429.9 467.7 L423.4 465.6 L416.8 464.2 L410.4 463.5 L404.0 463.4 L397.8 464.0 L391.8 465.3 L386.1 467.2 L380.7 469.7 L375.6 472.9 L371.0 476.7 L366.7 481.0 L362.9 485.9 L359.6 491.2 L356.8 497.0 L354.5 503.2 L352.8 509.8 L351.7 516.6 L351.1 523.8 L351.1 531.1 L351.7 538.5 L352.8 546.1 L354.5 553.6 L356.8 561.1 L359.6 568.6 L362.9 575.8 L366.7 582.9 L371.0 589.7 L375.6 596.1 L380.7 602.2 L386.1 607.9 L391.8 613.1 L397.8 617.9 L404.0 622.0 L410.4 625.6 L416.8 628.6 L423.4 631.0 L429.9 632.7 L436.4 633.8 L442.8 634.2 L449.1 634.0 L455.2 633.0 L461.1 631.4 L466.6 629.2 L471.9 626.4 L476.7 622.9 L481.2 618.8 L485.2 614.2 L488.8 609.1 L491.9 603.5 L494.4 597.5 L496.4 591.1 L497.8 584.4 L498.7 577.4 L499.0 570.2 Z'/></clipPath>
<g clip-path='url(#cfront)' opacity='.42'><path d='M338.6 498.4 L380.7 507.6 L373.2 540.2 L334.2 527.9 Z' fill='#7d838b'/><ellipse cx='376.2' cy='523.8' rx='10.2' ry='16.6' transform='rotate(10 376.2 523.8)' fill='#7d838b'/></g>
<path d='M489.2 569.6 L489.0 562.9 L488.2 556.2 L486.9 549.5 L485.1 542.7 L482.9 536.0 L480.1 529.4 L476.9 523.0 L473.3 516.8 L469.3 510.9 L464.9 505.2 L460.3 500.0 L455.3 495.1 L450.0 490.6 L444.6 486.7 L439.0 483.2 L433.2 480.2 L427.4 477.8 L421.5 476.0 L415.7 474.7 L409.9 474.1 L404.2 474.0 L398.7 474.5 L393.3 475.6 L388.2 477.4 L383.4 479.6 L378.8 482.5 L374.6 485.8 L370.8 489.7 L367.4 494.1 L364.5 498.9 L362.0 504.0 L359.9 509.6 L358.4 515.5 L357.4 521.6 L356.8 528.0 L356.8 534.5 L357.4 541.2 L358.4 548.0 L359.9 554.7 L362.0 561.4 L364.5 568.1 L367.4 574.6 L370.8 580.9 L374.6 587.0 L378.8 592.8 L383.4 598.2 L388.2 603.3 L393.3 608.0 L398.7 612.2 L404.2 615.9 L409.9 619.2 L415.7 621.8 L421.5 624.0 L427.4 625.5 L433.2 626.5 L439.0 626.9 L444.6 626.6 L450.0 625.8 L455.3 624.4 L460.3 622.4 L464.9 619.8 L469.3 616.7 L473.3 613.1 L476.9 609.0 L480.1 604.4 L482.9 599.4 L485.1 594.0 L486.9 588.3 L488.2 582.3 L489.0 576.0 L489.2 569.6 Z' fill='none' stroke='#fff' stroke-opacity='.22' stroke-width='1'/>
<path d='M499.0 570.2 L498.7 562.8 L497.8 555.3 L496.4 547.8 L494.4 540.2 L491.9 532.7 L488.8 525.4 L485.2 518.2 L481.2 511.3 L476.7 504.6 L471.9 498.4 L466.6 492.5 L461.1 487.0 L455.2 482.0 L449.1 477.6 L442.8 473.7 L436.4 470.4 L429.9 467.7 L423.4 465.6 L416.8 464.2 L410.4 463.5 L404.0 463.4 L397.8 464.0 L391.8 465.3 L386.1 467.2 L380.7 469.7 L375.6 472.9 L371.0 476.7 L366.7 481.0 L362.9 485.9 L359.6 491.2 L356.8 497.0 L354.5 503.2 L352.8 509.8 L351.7 516.6 L351.1 523.8 L351.1 531.1 L351.7 538.5 L352.8 546.1 L354.5 553.6 L356.8 561.1 L359.6 568.6 L362.9 575.8 L366.7 582.9 L371.0 589.7 L375.6 596.1 L380.7 602.2 L386.1 607.9 L391.8 613.1 L397.8 617.9 L404.0 622.0 L410.4 625.6 L416.8 628.6 L423.4 631.0 L429.9 632.7 L436.4 633.8 L442.8 634.2 L449.1 634.0 L455.2 633.0 L461.1 631.4 L466.6 629.2 L471.9 626.4 L476.7 622.9 L481.2 618.8 L485.2 614.2 L488.8 609.1 L491.9 603.5 L494.4 597.5 L496.4 591.1 L497.8 584.4 L498.7 577.4 L499.0 570.2 Z' fill='none' stroke='#fff' stroke-opacity='.08' stroke-width='1.5'/>
<g>
<ellipse cx="504.2" cy="557.8" rx="5.6" ry="17.7" transform="rotate(8 504.2 557.8)" fill="url(#nzr)"/>
<path d="M506.4 540.1 L544 548.8 L536 583.8 L501.8 575.3 Z" fill="url(#nzr)"/>
<ellipse cx="549.9" cy="567.4" rx="14.6" ry="28.8" transform="rotate(8 549.9 567.4)" fill="url(#rimR)"/>
<ellipse cx="557.1" cy="568.9" rx="14.6" ry="28.8" transform="rotate(8 557.1 568.9)" fill="#48515f"/>
<clipPath id="holeR"><ellipse cx="556.9" cy="568.9" rx="8.5" ry="16.9" transform="rotate(8 556.9 568.9)"/></clipPath>
<g clip-path="url(#holeR)"><rect x="540" y="545" width="36" height="50" fill="url(#inR)"/>
<ellipse cx="561.6" cy="570.2" rx="8.3" ry="16.6" transform="rotate(8 561.6 570.2)" fill="#0b0d10"/></g>
</g><rect x='216' y='196' width='4' height='4' fill='#a9a9a9'/><rect x='223' y='196' width='13' height='4' fill='#a9a9a9'/><rect x='216' y='203' width='4' height='4' fill='#a9a9a9'/><rect x='223' y='203' width='13' height='4' fill='#a9a9a9'/><rect x='216' y='210' width='4' height='4' fill='#a9a9a9'/><rect x='223' y='210' width='13' height='4' fill='#a9a9a9'/><circle cx='223' cy='236' r='2' fill='#a9a9a9'/><circle cx='229' cy='236' r='2' fill='#a9a9a9'/><circle cx='218' cy='242' r='2' fill='#a9a9a9'/><circle cx='223' cy='242' r='2' fill='#a9a9a9'/><circle cx='229' cy='242' r='2' fill='#2b87ba'/><circle cx='234' cy='242' r='2' fill='#a9a9a9'/><circle cx='218' cy='248' r='2' fill='#a9a9a9'/><circle cx='223' cy='248' r='2' fill='#a9a9a9'/><circle cx='229' cy='248' r='2' fill='#a9a9a9'/><circle cx='234' cy='248' r='2' fill='#a9a9a9'/><circle cx='223' cy='254' r='2' fill='#2b87ba'/><circle cx='229' cy='254' r='2' fill='#a9a9a9'/><rect x='223.8' y='269' width='4.4' height='5' fill='#a9a9a9' transform='rotate(0 226 279)'/><rect x='223.8' y='269' width='4.4' height='5' fill='#a9a9a9' transform='rotate(45 226 279)'/><rect x='223.8' y='269' width='4.4' height='5' fill='#a9a9a9' transform='rotate(90 226 279)'/><rect x='223.8' y='269' width='4.4' height='5' fill='#a9a9a9' transform='rotate(135 226 279)'/><rect x='223.8' y='269' width='4.4' height='5' fill='#a9a9a9' transform='rotate(180 226 279)'/><rect x='223.8' y='269' width='4.4' height='5' fill='#a9a9a9' transform='rotate(225 226 279)'/><rect x='223.8' y='269' width='4.4' height='5' fill='#a9a9a9' transform='rotate(270 226 279)'/><rect x='223.8' y='269' width='4.4' height='5' fill='#a9a9a9' transform='rotate(315 226 279)'/><circle cx='226' cy='279' r='6.2' fill='none' stroke='#a9a9a9' stroke-width='3.2'/><rect x='572' y='189' width='32' height='32' fill='#4b4b4b'/><path d='M428.300 204.800 L440 193.300 L451.700 204.800 H449.500 V216 H443.300 V207 H436.900 V216 H430.500 V204.800 Z' fill='none' stroke='#a9a9a9' stroke-width='1.9' stroke-linejoin='miter'/><circle cx='477' cy='204.800' r='11.500' fill='none' stroke='#a9a9a9' stroke-width='1.9'/><path d='M466 203.600 Q477 196.500 488 203.600' fill='none' stroke='#a9a9a9' stroke-width='2.200'/><path d='M471.600 201.600 Q477 199.600 482.400 201.600 L482.400 203.600 A5.400 6.400 0 0 1 471.600 203.600 Z' fill='#a9a9a9'/><rect x='502.500' y='193.800' width='13.500' height='13' fill='none' stroke='#a9a9a9' stroke-width='1.6'/><circle cx='514.900' cy='205.600' r='6.900' fill='#404040' stroke='#a9a9a9' stroke-width='2'/><path d='M509.500 206.800 H516 V200.200' fill='none' stroke='#7d7d7d' stroke-width='1.500'/><path d='M519.800 210.800 L526 216.600' stroke='#a9a9a9' stroke-width='3.200'/><circle cx='548.500' cy='203' r='8.6' fill='none' stroke='#a9a9a9' stroke-width='2.2'/><path d='M555 209.500 L562.500 217' stroke='#a9a9a9' stroke-width='3.2'/><path d='M577 205 H599 M588 194 V216' stroke='#a9a9a9' stroke-width='1.8'/><path d='M584.500 197.500 L588 194 L591.500 197.500 M584.500 212.500 L588 216 L591.500 212.500 M580.500 201.500 L577 205 L580.500 208.500 M595.500 201.500 L599 205 L595.500 208.500' fill='none' stroke='#a9a9a9' stroke-width='1.8'/><path d='M617 198.500 A10.6 10.6 0 1 1 616 211.500' fill='none' stroke='#a9a9a9' stroke-width='2'/><path d='M615.500 193.500 V200.500 H622.500' fill='none' stroke='#a9a9a9' stroke-width='2'/><path d='M651.5 200.5 V195.5 H656.5 M651.5 195.5 L657.5 201.5' fill='none' stroke='#a9a9a9' stroke-width='1.8'/><path d='M672.5 200.5 V195.5 H667.5 M672.5 195.5 L666.5 201.5' fill='none' stroke='#a9a9a9' stroke-width='1.8'/><path d='M651.5 209.5 V214.5 H656.5 M651.5 214.5 L657.5 208.5' fill='none' stroke='#a9a9a9' stroke-width='1.8'/><path d='M672.5 209.5 V214.5 H667.5 M672.5 214.5 L666.5 208.5' fill='none' stroke='#a9a9a9' stroke-width='1.8'/><g>
<ellipse cx="844" cy="262" rx="42" ry="19" fill="#5a5a5a"/>
<ellipse cx="844" cy="261" rx="32" ry="14" fill="#4c4c4c"/>
<path d="M795 251.500 L815 244 L818 257 L813 256 Z" fill="#8e8e8e" opacity=".9"/>
<path d="M790.500 280.500 L815 264.500 L844 274 L821.500 293.500 Z" fill="#8c8c8c" opacity=".9"/>
<path d="M861 270 L878 257.500 L903 264 L896 280 Z" fill="#8c8c8c" opacity=".9"/>
<path d="M868 247 L876 243 L872 250 Z" fill="#8a8a8a" opacity=".9"/>
<path d="M816 226.500 L838 219 L869.500 223 L869 255.500 L851.500 272.500 L818 262.500 Z" fill="#a6a6a6"/>
<path d="M816 226.500 L852.500 231 L851.500 272.500 L818 262.500 Z" fill="#a3a3a3"/>
<path d="M852.500 231 L869.500 223 L869 255.500 L851.500 272.500 Z" fill="#9a9a9a"/>
<path d="M816 226.500 L838 219 L869.500 223 L852.500 231 Z" fill="#a9a9a9"/>
<path d="M838 219 L838.500 250 L818 262.500 M838.500 250 L869 255.500" fill="none" stroke="#8e8e8e" stroke-width="1"/>
<path d="M816 226.500 L838 219 L869.500 223 L869 255.500 L851.500 272.500 L818 262.500 Z M816 226.500 L852.500 231 L869.500 223 M852.500 231 L851.500 272.500" fill="none" stroke="#1c1c1c" stroke-width="1.5" stroke-linejoin="round"/>
</g><g fill="#fff" stroke="none">
<circle cx="250.500" cy="667.500" r="4.2"/>
<rect x="249.3" y="646" width="2.4" height="20"/>
<path d="M250.500 631.500 L255 648 L246 648 Z"/>
<path d="M251 666.500 L268 670.500 L267.500 673 L250.500 669 Z"/>
<path d="M284.500 674.500 L268 676.500 L269.500 667 Z"/>
<path d="M251.500 665.500 L261 658.500 L263 661.500 L253.500 668.500 Z"/>
<path d="M258 658.500 L270 656 L263.500 665.500 Z"/>
<circle cx="261" cy="661.800" r="1.300" fill="#404040"/>
</g></g></svg><span class='t' style='left:252px;top:617.0px;font-size:11px;color:#fff;font-weight:400;letter-spacing:1.266px;'>Z</span><span class='t' style='left:270px;top:642.0px;font-size:11px;color:#fff;font-weight:400;letter-spacing:0.656px;'>Y</span><span class='t' style='left:285px;top:658.0px;font-size:11px;color:#fff;font-weight:400;letter-spacing:0.656px;'>X</span>
<span class='t' style='left:211px;top:693.0px;font-size:12px;color:#d6d6d6;font-weight:400;letter-spacing:-0.301px;'>Tube Map: [Total: 0 tubes] [Section 1: 0 tubes @ 45° / 0.938&quot;]</span>
<div class='a' style='left:907px;top:157px;width:327px;height:557px;border:1px solid #b4b4b4;box-sizing:border-box;background:#fff'></div>
<span class='t' style='left:920px;top:169.0px;font-size:15.5px;color:#444;font-weight:400;letter-spacing:-0.321px;'>Project</span>
<svg style="left:1192px;top:171px" width="34" height="12" viewBox="0 0 34 12"><path d="M1 6.5 h8 M3.5 1.5 h3.5 v5 h-3.5 z M5 7 v4" fill="none" stroke="#4a4a4a" stroke-width="1.1"/><rect x="5.5" y="1.5" width="2" height="5" fill="#4a4a4a"/>
<path d="M20.5 2.5 l7 7 M27.500 2.5 l-7 7" stroke="#555" stroke-width="1.5"/></svg>
<div class='a' style='left:910px;top:198px;width:174px;height:24px;border:1px solid #b0b0b0;border-bottom:none;box-sizing:border-box;background:#fff'></div>
<div class='a' style='left:1083px;top:196px;width:146px;height:26px;border:1px solid #b0b0b0;border-bottom:none;box-sizing:border-box;background:#fff'></div>
<div class='a' style='left:909px;top:221px;width:323px;height:491px;border:1px solid #b2b2b2;box-sizing:border-box'></div>
<div class='a' style='left:910px;top:222px;width:321px;height:489px;border:1px solid #868a94;box-sizing:border-box'></div>
<span class='t' style='left:921px;top:202.0px;font-size:12.5px;color:#2a2a2a;font-weight:400;letter-spacing:-0.069px;'>Component</span>
<span class='t' style='left:1095px;top:201.0px;font-size:12.5px;color:#2a2a2a;font-weight:400;letter-spacing:-0.009px;'>Model</span>
<svg style='left:907px;top:157px' width='327' height='557' viewBox='907 157 327 557'><rect x='920.0' y='230.0' width='9' height='9' rx='1.2' fill='#f2f2f2' stroke='#989898' stroke-width='1'/><path d='M922.0 234.5 h5' stroke='#3b5fa8' stroke-width='1'/><path d='M930 233.5 H938' stroke='#8a8a8a' stroke-width='1' stroke-dasharray='1 1'/><circle cx='945.5' cy='233.5' r='4.2' fill='#fff' stroke='#222' stroke-width='1'/><circle cx='945.5' cy='233.5' r='2.6' fill='#888' stroke='none'/><path d='M945.5 226 v3 M945.5 238 v3 M943.5 226.5 h4' stroke='#222' stroke-width='1'/><path d='M946.5 242 V390' stroke='#8a8a8a' stroke-width='1' stroke-dasharray='1 1'/><rect x='942.0' y='248.0' width='9' height='9' rx='1.2' fill='#f2f2f2' stroke='#989898' stroke-width='1'/><path d='M944.0 252.5 h5' stroke='#3b5fa8' stroke-width='1'/><path d='M952 251.5 H960' stroke='#8a8a8a' stroke-width='1' stroke-dasharray='1 1'/><rect x='961.5' y='244.5' width='12' height='12' fill='#fff' stroke='#333' stroke-width='1'/><path d='M963.9 250.7 l2.6 2.8 l5 -6' fill='none' stroke='#222' stroke-width='1.2'/><rect x='942.0' y='284.0' width='9' height='9' rx='1.2' fill='#f2f2f2' stroke='#989898' stroke-width='1'/><path d='M944.0 288.5 h5' stroke='#3b5fa8' stroke-width='1'/><path d='M946.5 286.0 v5' stroke='#3b5fa8' stroke-width='1'/><path d='M952 287.5 H960' stroke='#8a8a8a' stroke-width='1' stroke-dasharray='1 1'/><rect x='961.5' y='280.5' width='12' height='12' fill='#fff' stroke='#333' stroke-width='1'/><path d='M963.9 286.7 l2.6 2.8 l5 -6' fill='none' stroke='#222' stroke-width='1.2'/><rect x='942.0' y='302.0' width='9' height='9' rx='1.2' fill='#f2f2f2' stroke='#989898' stroke-width='1'/><path d='M944.0 306.5 h5' stroke='#3b5fa8' stroke-width='1'/><path d='M946.5 304.0 v5' stroke='#3b5fa8' stroke-width='1'/><path d='M952 305.5 H960' stroke='#8a8a8a' stroke-width='1' stroke-dasharray='1 1'/><rect x='961.5' y='298.5' width='12' height='12' fill='#fff' stroke='#333' stroke-width='1'/><path d='M963.9 304.7 l2.6 2.8 l5 -6' fill='none' stroke='#222' stroke-width='1.2'/><rect x='942.0' y='320.0' width='9' height='9' rx='1.2' fill='#f2f2f2' stroke='#989898' stroke-width='1'/><path d='M944.0 324.5 h5' stroke='#3b5fa8' stroke-width='1'/><path d='M946.5 322.0 v5' stroke='#3b5fa8' stroke-width='1'/><path d='M952 323.5 H960' stroke='#8a8a8a' stroke-width='1' stroke-dasharray='1 1'/><rect x='961.5' y='316.5' width='12' height='12' fill='#fff' stroke='#333' stroke-width='1'/><path d='M963.9 322.7 l2.6 2.8 l5 -6' fill='none' stroke='#222' stroke-width='1.2'/><rect x='942.0' y='338.0' width='9' height='9' rx='1.2' fill='#f2f2f2' stroke='#989898' stroke-width='1'/><path d='M944.0 342.5 h5' stroke='#3b5fa8' stroke-width='1'/><path d='M946.5 340.0 v5' stroke='#3b5fa8' stroke-width='1'/><path d='M952 341.5 H960' stroke='#8a8a8a' stroke-width='1' stroke-dasharray='1 1'/><rect x='961.5' y='334.5' width='12' height='12' fill='#fff' stroke='#333' stroke-width='1'/><path d='M963.9 340.7 l2.6 2.8 l5 -6' fill='none' stroke='#222' stroke-width='1.2'/><rect x='942.0' y='356.0' width='9' height='9' rx='1.2' fill='#f2f2f2' stroke='#989898' stroke-width='1'/><path d='M944.0 360.5 h5' stroke='#3b5fa8' stroke-width='1'/><path d='M946.5 358.0 v5' stroke='#3b5fa8' stroke-width='1'/><path d='M952 359.5 H960' stroke='#8a8a8a' stroke-width='1' stroke-dasharray='1 1'/><rect x='961.5' y='352.5' width='12' height='12' fill='#fff' stroke='#333' stroke-width='1'/><path d='M963.9 358.7 l2.6 2.8 l5 -6' fill='none' stroke='#222' stroke-width='1.2'/><rect x='942.0' y='374.0' width='9' height='9' rx='1.2' fill='#f2f2f2' stroke='#989898' stroke-width='1'/><path d='M944.0 378.5 h5' stroke='#3b5fa8' stroke-width='1'/><path d='M946.5 376.0 v5' stroke='#3b5fa8' stroke-width='1'/><path d='M952 377.5 H960' stroke='#8a8a8a' stroke-width='1' stroke-dasharray='1 1'/><rect x='961.5' y='370.5' width='12' height='12' fill='#fff' stroke='#333' stroke-width='1'/><path d='M963.9 376.7 l2.6 2.8 l5 -6' fill='none' stroke='#222' stroke-width='1.2'/><rect x='942.0' y='392.0' width='9' height='9' rx='1.2' fill='#f2f2f2' stroke='#989898' stroke-width='1'/><path d='M944.0 396.5 h5' stroke='#3b5fa8' stroke-width='1'/><path d='M946.5 394.0 v5' stroke='#3b5fa8' stroke-width='1'/><path d='M952 395.5 H960' stroke='#8a8a8a' stroke-width='1' stroke-dasharray='1 1'/><path d='M968.5 259 V269' stroke='#8a8a8a' stroke-width='1' stroke-dasharray='1 1'/><path d='M969 269.5 H984' stroke='#8a8a8a' stroke-width='1' stroke-dasharray='1 1'/><rect x='984.5' y='262.5' width='12' height='12' fill='#fff' stroke='#333' stroke-width='1'/><path d='M986.9 268.7 l2.6 2.8 l5 -6' fill='none' stroke='#222' stroke-width='1.2'/><rect x='1016' y='261' width='66' height='17' fill='#ececec'/><path d='M977.5 247.0 v9.5 h2 v-9.5 z M979.5 248.5 h8.5 M979.5 251.5 h8.5 M979.5 254.5 h8.5' stroke='#1e90e8' stroke-width='1.2' fill='none'/><path d='M985 283.0 v9.5 h2 v-9.5 z M985 284.5 h-9 M985 287.5 h-9 M985 290.5 h-9' stroke='#1e90e8' stroke-width='1.2' fill='none'/><path d='M977 301.0 v9.5 M987.5 301.0 v9.5 M977 303.0 h10.5 M977 308.0 h10.5' stroke='#1e90e8' stroke-width='1.4' fill='none'/><rect x='979.3' y='320.0' width='5.4' height='7' fill='none' stroke='#1e90e8' stroke-width='1.3'/><path d='M982 316.5 v3.5 M982 327.0 v3.5 M980 316.5 h4 M980.5 330.5 h3' stroke='#1e90e8' stroke-width='1.3'/><rect x='979.3' y='338.0' width='5.4' height='7' fill='none' stroke='#1e90e8' stroke-width='1.3'/><path d='M982 334.5 v3.5 M982 345.0 v3.5 M980 334.5 h4 M980.5 348.5 h3' stroke='#1e90e8' stroke-width='1.3'/><rect x='980' y='353.0' width='4' height='13' fill='none' stroke='#1e90e8' stroke-width='1.2'/><path d='M977.5 353.5 q-3 6 0 12 M986.5 353.5 q3 6 0 12' fill='none' stroke='#1e90e8' stroke-width='1.2'/><path d='M974.5 356.5 v6 M989.5 356.5 v6' stroke='#1e90e8' stroke-width='1'/><path d='M976.5 373.0 h11.5' stroke='#1e90e8' stroke-width='1.8' fill='none'/><path d='M979.5 374.0 v9 M984.5 374.0 v9' stroke='#1e90e8' stroke-width='1.4' fill='none'/><rect x='969' y='389' width='1' height='1' fill='#333'/><rect x='971' y='389' width='1' height='1' fill='#333'/><rect x='973' y='389' width='1' height='1' fill='#333'/><rect x='969' y='392' width='1' height='1' fill='#333'/><rect x='971' y='392' width='1' height='1' fill='#333'/><rect x='973' y='392' width='1' height='1' fill='#333'/><rect x='969' y='390' width='1' height='1' fill='#333'/><rect x='971' y='390' width='1' height='1' fill='#333'/><rect x='973' y='390' width='1' height='1' fill='#333'/><rect x='963' y='389' width='1' height='1' fill='#333'/><rect x='962' y='392' width='1' height='1' fill='#333'/><rect x='964' y='392' width='1' height='1' fill='#333'/><rect x='961' y='396' width='1' height='1' fill='#333'/><rect x='963' y='396' width='1' height='1' fill='#333'/><rect x='965' y='396' width='1' height='1' fill='#333'/><rect x='967' y='396' width='1' height='1' fill='#333'/><rect x='969' y='396' width='1' height='1' fill='#333'/><rect x='971' y='396' width='1' height='1' fill='#333'/><rect x='973' y='396' width='1' height='1' fill='#333'/><rect x='961' y='398' width='1' height='1' fill='#333'/><rect x='963' y='398' width='1' height='1' fill='#333'/><rect x='965' y='398' width='1' height='1' fill='#333'/><rect x='967' y='398' width='1' height='1' fill='#333'/><rect x='969' y='398' width='1' height='1' fill='#333'/><rect x='971' y='398' width='1' height='1' fill='#333'/><rect x='973' y='398' width='1' height='1' fill='#333'/><rect x='961' y='400' width='1' height='1' fill='#333'/><rect x='963' y='400' width='1' height='1' fill='#333'/><rect x='965' y='400' width='1' height='1' fill='#333'/><rect x='967' y='400' width='1' height='1' fill='#333'/><rect x='969' y='400' width='1' height='1' fill='#333'/><rect x='971' y='400' width='1' height='1' fill='#333'/><rect x='973' y='400' width='1' height='1' fill='#333'/><rect x='961' y='402' width='1' height='1' fill='#333'/><rect x='963' y='402' width='1' height='1' fill='#333'/><rect x='965' y='402' width='1' height='1' fill='#333'/><rect x='967' y='402' width='1' height='1' fill='#333'/><rect x='969' y='402' width='1' height='1' fill='#333'/><rect x='971' y='402' width='1' height='1' fill='#333'/><rect x='973' y='402' width='1' height='1' fill='#333'/></svg>
<span class='t' style='left:959px;top:225.0px;font-size:12px;color:#1a1a1a;font-weight:400;letter-spacing:0.016px;'>Component:Tube Layout</span>
<span class='t' style='left:995px;top:243.0px;font-size:12px;color:#1a1a1a;font-weight:400;letter-spacing:-0.090px;'>Front Tubesheet - Front</span>
<span class='t' style='left:1018px;top:261.0px;font-size:12px;color:#1a1a1a;font-weight:400;letter-spacing:-0.206px;'>Transparent</span>
<span class='t' style='left:995px;top:279.0px;font-size:12px;color:#1a1a1a;font-weight:400;letter-spacing:-0.384px;'>Rear Tubesheet - Rear</span>
<span class='t' style='left:995px;top:297.0px;font-size:12px;color:#1a1a1a;font-weight:400;letter-spacing:-0.338px;'>Shell</span>
<span class='t' style='left:995px;top:315.0px;font-size:12px;color:#1a1a1a;font-weight:400;letter-spacing:-0.037px;'>Front Channel/Header</span>
<span class='t' style='left:995px;top:333.0px;font-size:12px;color:#1a1a1a;font-weight:400;letter-spacing:-0.197px;'>Rear Channel/Header</span>
<span class='t' style='left:995px;top:351.0px;font-size:12px;color:#1a1a1a;font-weight:400;letter-spacing:-0.170px;'>Support Plate Groups</span>
<span class='t' style='left:995px;top:369.0px;font-size:12px;color:#1a1a1a;font-weight:400;letter-spacing:-0.384px;'>Nozzles</span>
<span class='t' style='left:982px;top:387.0px;font-size:12px;color:#1a1a1a;font-weight:400;letter-spacing:-0.251px;'>Tube Sections</span>
</body></html>
